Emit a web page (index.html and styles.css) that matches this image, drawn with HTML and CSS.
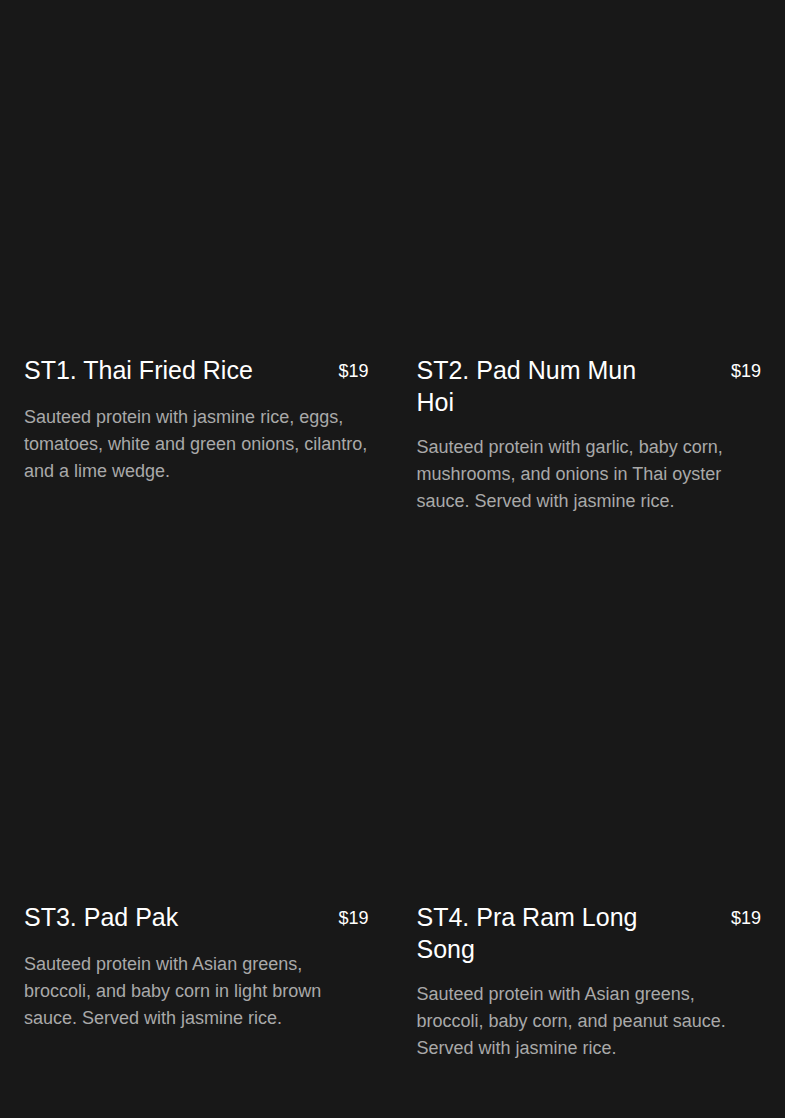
FILE: index.html
```html
<!DOCTYPE html>
<html lang="en">
<head>
  <meta charset="UTF-8" />
  <meta name="viewport" content="width=device-width, initial-scale=1" />
  <title>Stir Fry</title>
  <link rel="stylesheet" href="styles.css">
</head>
<body>
  <div class="menu-grid">
    <div class="menu-item">
      <div class="item-photo"></div>
      <div class="item-head">
        <h3 class="item-title">ST1. Thai Fried Rice</h3>
        <span class="item-price">$19</span>
      </div>
      <p class="item-desc">Sauteed protein with jasmine rice, eggs, tomatoes, white and green onions, cilantro, and a lime wedge.</p>
    </div>
    <div class="menu-item">
      <div class="item-photo"></div>
      <div class="item-head">
        <h3 class="item-title">ST2. Pad Num Mun Hoi</h3>
        <span class="item-price">$19</span>
      </div>
      <p class="item-desc">Sauteed protein with garlic, baby corn, mushrooms, and onions in Thai oyster sauce. Served with jasmine rice.</p>
    </div>
    <div class="menu-item">
      <div class="item-photo"></div>
      <div class="item-head">
        <h3 class="item-title">ST3. Pad Pak</h3>
        <span class="item-price">$19</span>
      </div>
      <p class="item-desc">Sauteed protein with Asian greens, broccoli, and baby corn in light brown sauce. Served with jasmine rice.</p>
    </div>
    <div class="menu-item">
      <div class="item-photo"></div>
      <div class="item-head">
        <h3 class="item-title">ST4. Pra Ram Long Song</h3>
        <span class="item-price">$19</span>
      </div>
      <p class="item-desc">Sauteed protein with Asian greens, broccoli, baby corn, and peanut sauce. Served with jasmine rice.</p>
    </div>
  </div>
</body>
</html>
```

FILE: styles.css
```css
body {
  margin: 0;
  background: #181818;
  font-family: "Liberation Sans", Arial, sans-serif;
  color: #fff;
}
.menu-grid {
  display: grid;
  grid-template-columns: 1fr 1fr;
  column-gap: 48px;
  row-gap: 56px;
  padding: 24px 24px;
}
.item-photo {
  height: 314px;
  background: #181818;
}
.item-head {
  display: flex;
  justify-content: space-between;
  align-items: flex-start;
  margin-top: 16px;
}
.item-title {
  margin: 0;
  max-width: 240px;
  font-size: 25px;
  line-height: 32px;
  font-weight: 400;
  color: #fff;
}
.item-price {
  font-size: 18px;
  line-height: 34px;
  color: #fff;
}
.item-desc {
  margin: 16px 0 0;
  font-size: 18px;
  line-height: 27px;
  color: #a9a9a9;
}
```
